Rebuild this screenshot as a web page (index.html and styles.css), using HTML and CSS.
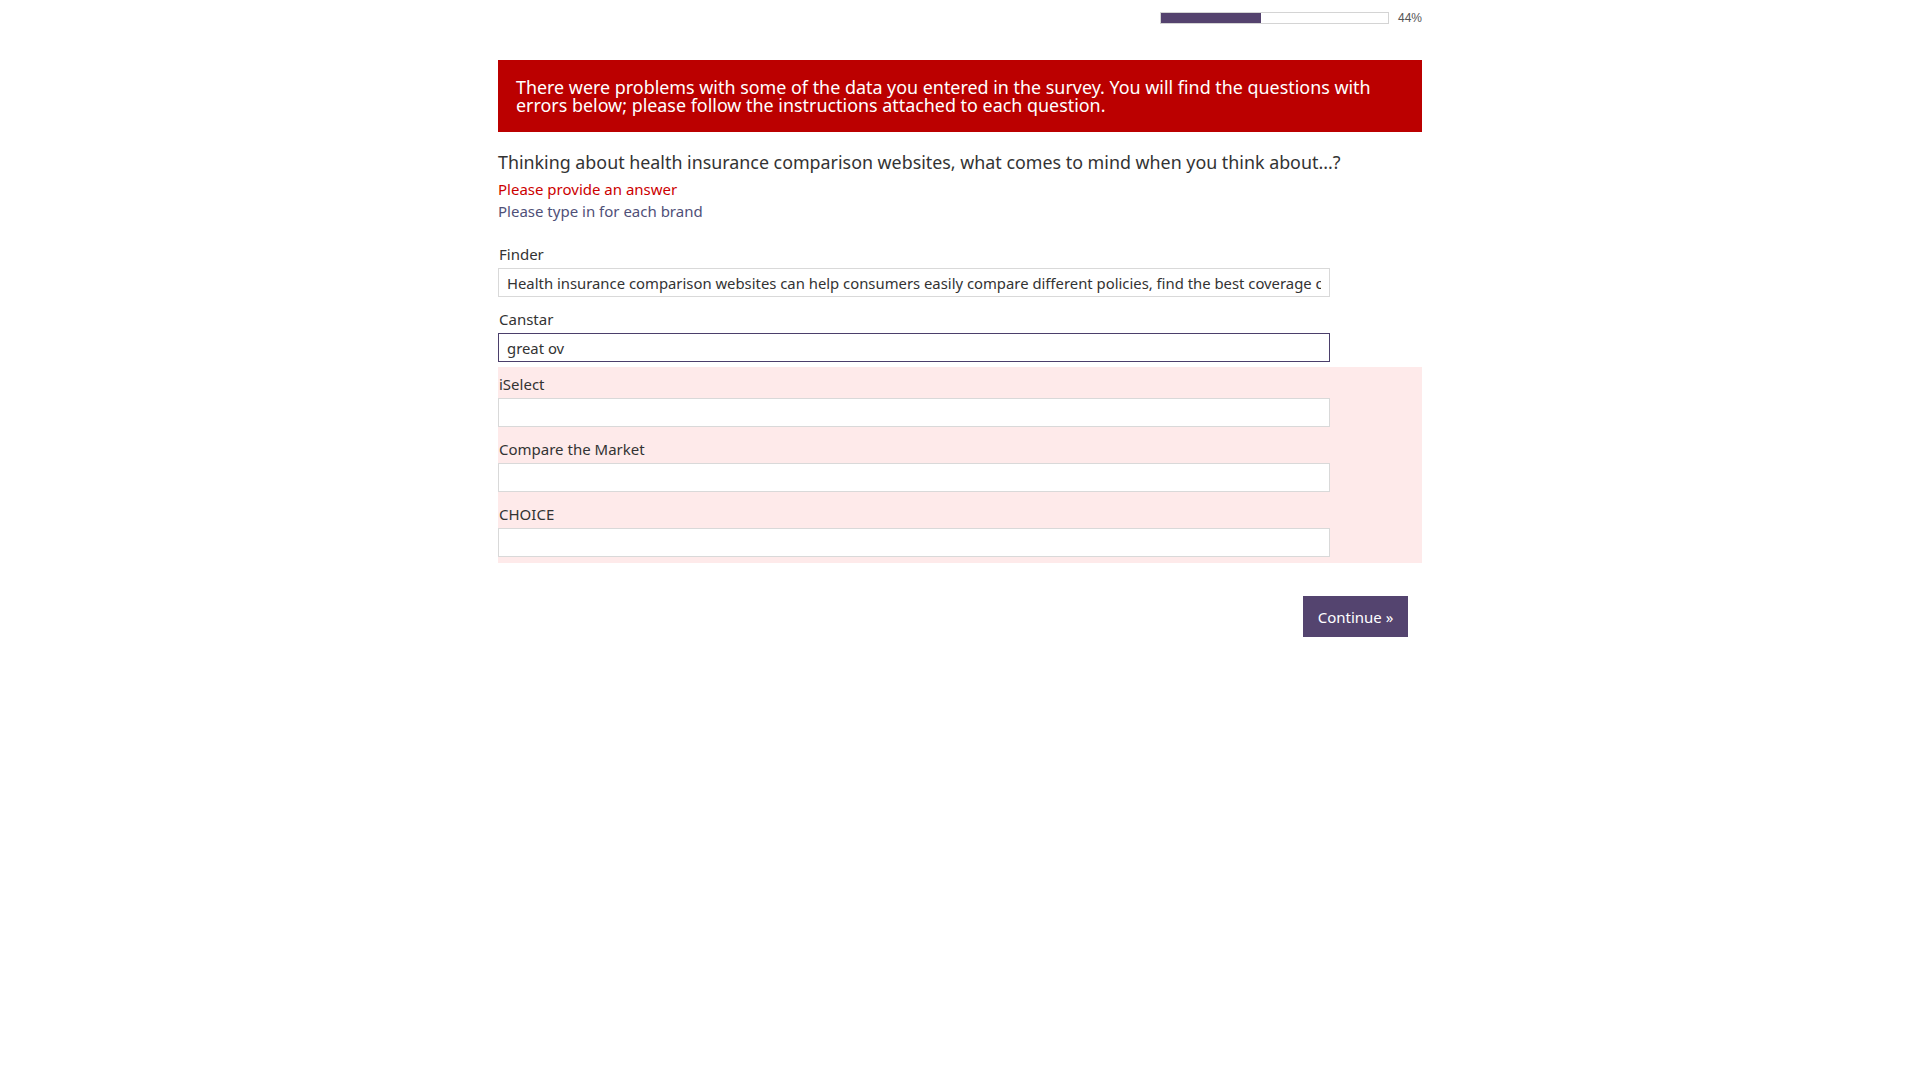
FILE: index.html
```html
<!DOCTYPE html>
<html lang="en">
<head>
<meta charset="utf-8">
<title>Survey</title>
<link rel="stylesheet" href="styles.css">
</head>
<body>
<div class="page">
  <div class="progress">
    <div class="progress-track"><div class="progress-fill" style="width:44%"></div></div>
    <span class="progress-label">44%</span>
  </div>
  <div class="error-box">There were problems with some of the data you entered in the survey. You will find the questions with errors below; please follow the instructions attached to each question.</div>
  <div class="question">
    <div class="question-text">Thinking about health insurance comparison websites, what comes to mind when you think about...?</div>
    <div class="question-error">Please provide an answer</div>
    <div class="question-instr">Please type in for each brand</div>
    <div class="rows">
      <div class="row">
        <label class="row-label">Finder</label>
        <input class="row-input" type="text" value="Health insurance comparison websites can help consumers easily compare different policies, find the best coverage options and save money on premiums.">
      </div>
      <div class="row">
        <label class="row-label">Canstar</label>
        <input class="row-input focused" type="text" value="great ov">
      </div>
      <div class="row invalid">
        <label class="row-label">iSelect</label>
        <input class="row-input" type="text" value="">
      </div>
      <div class="row invalid">
        <label class="row-label">Compare the Market</label>
        <input class="row-input" type="text" value="">
      </div>
      <div class="row invalid last">
        <label class="row-label">CHOICE</label>
        <input class="row-input" type="text" value="">
      </div>
    </div>
  </div>
  <div class="actions">
    <button class="continue" type="button">Continue »</button>
  </div>
</div>
</body>
</html>
```

FILE: styles.css
```css
* { box-sizing: border-box; }
html, body { margin: 0; padding: 0; background: #fff; }
body { font-family: "Noto Sans", "Open Sans", sans-serif; color: #333; }

.page {
  width: 924px;
  margin: 0 auto;
}

.progress {
  display: flex;
  justify-content: flex-end;
  align-items: center;
  height: 35px;
}
.progress-track {
  width: 229px;
  height: 12px;
  border: 1px solid #d4d4d4;
  background: #fff;
  margin-right: 9px;
}
.progress-fill {
  height: 100%;
  background: #54426e;
}
.progress-label {
  font-family: "Liberation Sans", Arial, sans-serif;
  font-size: 12px;
  color: #555;
  width: 24px;
  text-align: right;
}

.error-box {
  margin-top: 25px;
  background: #bb0000;
  color: #fff;
  font-size: 17.9px;
  line-height: 18px;
  padding: 18px;
}

.question { margin-top: 19px; }
.question-text {
  font-size: 17.85px;
  line-height: 22px;
  color: #333;
}
.question-error {
  margin-top: 5px;
  font-size: 15px;
  line-height: 22px;
  color: #cc0000;
}
.question-instr {
  font-size: 15px;
  line-height: 22px;
  color: #4f5078;
}

.rows { margin-top: 15px; }
.row {
  display: flex;
  flex-direction: column;
  padding-top: 7px;
  padding-bottom: 5px;
}
.row.last { padding-bottom: 6px; }
.row.invalid { background: #feeaea; }
.row-label {
  font-size: 15px;
  line-height: 20px;
  margin-bottom: 4px;
  padding-left: 1px;
}
.row-input {
  width: 90%;
  height: 29px;
  border: 1px solid #d9d9d9;
  background: #fff;
  padding: 0 8px;
  font-family: "Noto Sans", "Open Sans", sans-serif;
  font-size: 14.85px;
  color: #333;
  outline: none;
}
.row-input.focused { border-color: #4b3f6b; }

.actions {
  display: flex;
  justify-content: flex-end;
  padding-right: 14px;
  margin-top: 33px;
}
.continue {
  background: #54446f;
  color: #fff;
  border: none;
  font-family: "Noto Sans", "Open Sans", sans-serif;
  font-size: 15px;
  width: 105px;
  height: 41px;
  padding: 0;
  cursor: pointer;
}
```
